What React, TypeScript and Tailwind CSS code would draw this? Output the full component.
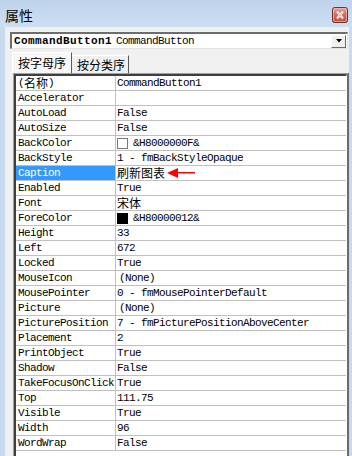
import type { ReactNode } from "react";

const Cjk = ({ children }: { children: ReactNode }) => (
  <span className="font-['Noto_Sans_CJK_SC',sans-serif] text-[12px] tracking-normal leading-[14px]">
    {children}
  </span>
);

const Swatch = ({ color }: { color: string }) => (
  <span
    className={`inline-block w-[11px] h-[11px] mr-[5px] border ${
      color === "black" ? "bg-black border-black" : "bg-white border-[#7a7a7a]"
    }`}
  />
);

const Arrow = () => (
  <svg width="28" height="10" viewBox="0 0 28 10" className="ml-[2px]">
    <polygon points="0,5 11,0 11,10" fill="#ff0000" />
    <rect x="10" y="4" width="18" height="1.5" fill="#ff0000" />
  </svg>
);

const rows: { label: ReactNode; value: ReactNode }[] = [
  { label: <>(<Cjk>名称</Cjk>)</>, value: "CommandButton1" },
  { label: "Accelerator", value: "" },
  { label: "AutoLoad", value: "False" },
  { label: "AutoSize", value: "False" },
  { label: "BackColor", value: <><Swatch color="white" />&amp;H8000000F&amp;</> },
  { label: "BackStyle", value: "1 - fmBackStyleOpaque" },
  { label: "Caption", value: <><Cjk>刷新图表</Cjk><Arrow /></> },
  { label: "Enabled", value: "True" },
  { label: "Font", value: <Cjk>宋体</Cjk> },
  { label: "ForeColor", value: <><Swatch color="black" />&amp;H80000012&amp;</> },
  { label: "Height", value: "33" },
  { label: "Left", value: "672" },
  { label: "Locked", value: "True" },
  { label: "MouseIcon", value: <span className="pl-[2px]">(None)</span> },
  { label: "MousePointer", value: "0 - fmMousePointerDefault" },
  { label: "Picture", value: <span className="pl-[2px]">(None)</span> },
  { label: "PicturePosition", value: "7 - fmPicturePositionAboveCenter" },
  { label: "Placement", value: "2" },
  { label: "PrintObject", value: "True" },
  { label: "Shadow", value: "False" },
  { label: "TakeFocusOnClick", value: "True" },
  { label: "Top", value: "111.75" },
  { label: "Visible", value: "True" },
  { label: "Width", value: "96" },
  { label: "WordWrap", value: "False" },
];

export default function App() {
  return (
    <div className="w-[352px] h-[456px] overflow-hidden flex flex-col bg-[#c8daee] font-['Liberation_Mono',monospace] text-[11px] tracking-[-0.6px] text-black">
      {/* title bar */}
      <div className="h-[27px] shrink-0 flex items-center justify-between pl-[5px] pr-[4px] bg-gradient-to-b from-[#bfd3eb] to-[#cddff3]">
        <span className="font-['Noto_Sans_CJK_SC',sans-serif] text-[14px] tracking-normal leading-none mt-[2px]">
          属性
        </span>
        <svg width="16" height="16" viewBox="0 0 16 16" className="mt-[2px]">
          <defs>
            <linearGradient id="cl" x1="0" y1="0" x2="0" y2="1">
              <stop offset="0" stopColor="#e8a79b" />
              <stop offset="0.5" stopColor="#d2695a" />
              <stop offset="1" stopColor="#c24a3a" />
            </linearGradient>
          </defs>
          <rect x="0.5" y="0.5" width="15" height="15" rx="2" fill="url(#cl)" stroke="#6e3028" />
          <rect x="1.5" y="1.5" width="13" height="13" rx="1.5" fill="none" stroke="#f4c9c0" strokeOpacity="0.6" />
          <path d="M5 4.5 L11 11.5 M11 4.5 L5 11.5" stroke="#ffffff" strokeWidth="2.2" />
          <path d="M5 4.5 L11 11.5 M11 4.5 L5 11.5" stroke="#6e3028" strokeWidth="0.6" strokeOpacity="0.5" />
        </svg>
      </div>

      {/* body */}
      <div className="flex-1 flex flex-col ml-[5px] mr-[3px] bg-[#f0f0f0]">
        {/* object combo */}
        <div className="mt-[5px] ml-[5px] mr-[1px] h-[17px] flex items-center bg-white border-t-2 border-l-2 border-b border-r border-t-[#6d6d6d] border-l-[#6d6d6d] border-b-[#e3e3e3] border-r-[#e3e3e3]">
          <span className="pl-[2px] font-bold tracking-[0.4px]">CommandButton1</span>
          <span className="pl-[4px]">CommandButton</span>
          <div className="ml-auto mr-[1px] w-[15px] h-[13px] flex items-center justify-center bg-[#f0f0f0] border border-t-white border-l-white border-r-[#696969] border-b-[#696969]">
            <svg width="6" height="4" viewBox="0 0 6 4">
              <polygon points="0,0 6,0 3,3.5" fill="#000" />
            </svg>
          </div>
        </div>

        {/* tabs */}
        <div className="mt-[3px] ml-[7px] h-[21px] flex items-end font-['Noto_Sans_CJK_SC',sans-serif] text-[12px] tracking-normal">
          <div className="h-[21px] w-[60px] flex items-center pl-[5px] bg-[#f7f7f7] border-t border-l border-r border-t-white border-l-white border-r-[#5a5a5a]">
            按字母序
          </div>
          <div className="h-[18px] w-[57px] flex items-center pl-[5px] border-t border-r border-t-white border-r-[#5a5a5a]">
            按分类序
          </div>
        </div>

        {/* property grid */}
        <div className="ml-[8px] flex-1 border-t border-l border-r-2 border-t-[#a0a0a0] border-l-[#a0a0a0] border-r-[#6b6b6b]">
          <div className="h-full bg-white border-t-2 border-l-2 border-r border-t-[#3f3f3f] border-l-[#3f3f3f] border-r-white">
            {rows.map((r, i) => (
              <div key={i} className="flex h-[15px] border-b border-[#c0c0c0]">
                <div
                  className={`w-[100px] shrink-0 pl-[2px] flex items-center leading-[14px] whitespace-nowrap border-r border-[#c0c0c0] ${
                    r.label === "Caption" ? "bg-[#3399ff] text-white" : ""
                  }`}
                >
                  {r.label}
                </div>
                <div className="flex-1 pl-[1px] flex items-center leading-[14px] whitespace-nowrap">
                  {r.value}
                </div>
              </div>
            ))}
          </div>
        </div>
      </div>
    </div>
  );
}
